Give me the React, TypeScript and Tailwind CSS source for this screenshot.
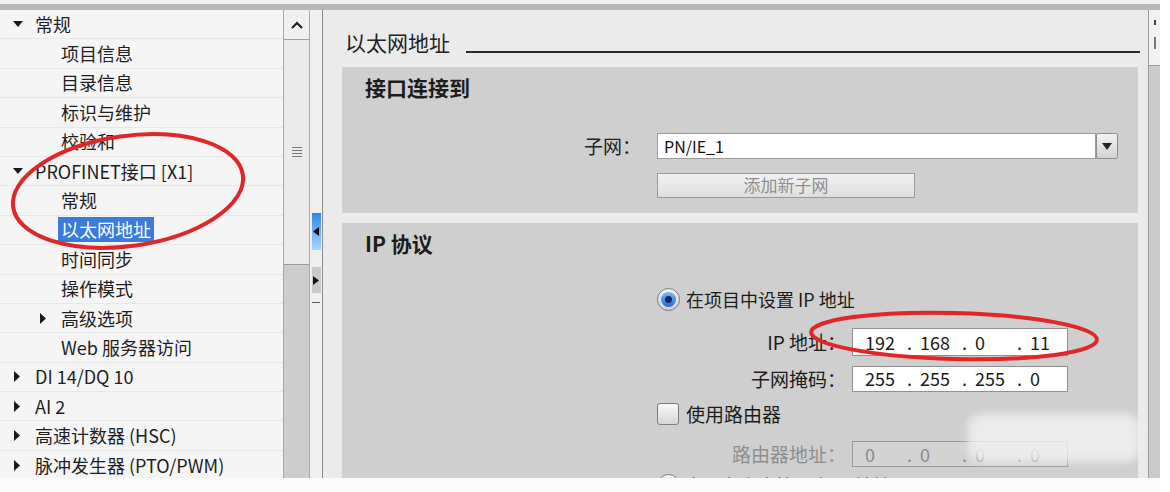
import React from 'react'

const font = { fontFamily: "'Noto Sans CJK SC', 'Noto Sans', sans-serif" }

type Row = { level: 0 | 1; arrow?: 'down' | 'right'; text: string; selected?: boolean }

const rows: Row[] = [
  { level: 0, arrow: 'down', text: '常规' },
  { level: 1, text: '项目信息' },
  { level: 1, text: '目录信息' },
  { level: 1, text: '标识与维护' },
  { level: 1, text: '校验和' },
  { level: 0, arrow: 'down', text: 'PROFINET接口 [X1]' },
  { level: 1, text: '常规' },
  { level: 1, text: '以太网地址', selected: true },
  { level: 1, text: '时间同步' },
  { level: 1, text: '操作模式' },
  { level: 1, arrow: 'right', text: '高级选项' },
  { level: 1, text: 'Web 服务器访问' },
  { level: 0, arrow: 'right', text: 'DI 14/DQ 10' },
  { level: 0, arrow: 'right', text: 'AI 2' },
  { level: 0, arrow: 'right', text: '高速计数器 (HSC)' },
  { level: 0, arrow: 'right', text: '脉冲发生器 (PTO/PWM)' },
]

function Arrow({ dir }: { dir: 'down' | 'right' }) {
  return dir === 'down' ? (
    <svg width="10" height="8" viewBox="0 0 10 8">
      <polygon points="0,1 10,1 5,7" fill="#1a1a1a" />
    </svg>
  ) : (
    <svg width="8" height="11" viewBox="0 0 8 11">
      <polygon points="1,0 7,5.5 1,11" fill="#1a1a1a" />
    </svg>
  )
}

function Tree() {
  return (
    <div className="w-[283px] h-full bg-[#f5f5f5] flex flex-col overflow-hidden">
      {rows.map((r, i) => (
        <div
          key={i}
          className={`h-[29.4px] shrink-0 flex items-center border-b border-[#e7e7e7] text-[18px] text-[#1e1e1e] ${r.level === 0 ? 'pl-[13px]' : 'pl-[39px]'}`}
        >
          <div className="w-[22px] flex items-center">{r.arrow && <Arrow dir={r.arrow} />}</div>
          {r.selected ? (
            <span className="bg-[#3a7bdc] text-white px-[3px] -ml-[3px] leading-[25px]">{r.text}</span>
          ) : (
            <span className="leading-[25px] whitespace-nowrap">{r.text}</span>
          )}
        </div>
      ))}
    </div>
  )
}

function ScrollBar() {
  return (
    <div className="w-[27px] h-full bg-[#cdcdcd] border-x border-[#a8a8a8] flex flex-col">
      <div className="h-[30px] bg-[#f0f0f0] border-b border-[#a0a0a0] flex items-center justify-center">
        <svg width="12" height="8" viewBox="0 0 12 8">
          <polyline points="1,7 6,2 11,7" fill="none" stroke="#222" strokeWidth="2.2" />
        </svg>
      </div>
      <div className="h-[225px] bg-[#ebebeb] border-b border-[#9a9a9a] flex items-center justify-center">
        <div className="flex flex-col gap-[2px] w-[10px]">
          <div className="h-[1px] bg-[#777]" />
          <div className="h-[1px] bg-[#777]" />
          <div className="h-[1px] bg-[#777]" />
          <div className="h-[1px] bg-[#777]" />
        </div>
      </div>
    </div>
  )
}

function SideStrip() {
  return (
    <div className="w-[13px] h-full bg-[#efefef] border-r border-[#8c8c8c] flex flex-col items-center">
      <div className="h-[203px]" />
      <div className="w-[9px] h-[37px] bg-gradient-to-b from-[#2a88e8] to-[#a9d6ff] flex items-center justify-center">
        <svg width="6" height="9" viewBox="0 0 6 9">
          <polygon points="6,0 0,4.5 6,9" fill="#111" />
        </svg>
      </div>
      <div className="h-[17px]" />
      <div className="w-[9px] h-[26px] bg-[#c9c9c9] flex items-center justify-center">
        <svg width="6" height="9" viewBox="0 0 6 9">
          <polygon points="0,0 6,4.5 0,9" fill="#111" />
        </svg>
      </div>
      <div className="mt-[9px] w-[8px] h-[1px] bg-[#555]" />
    </div>
  )
}

function Octets({ values }: { values: string[] }) {
  return (
    <div className="flex items-center pl-[12px] text-[18px]">
      {values.map((v, i) => (
        <div key={i} className="w-[55px] flex shrink-0">
          <span className="w-[42px]">{v}</span>
          {i < values.length - 1 && <span>.</span>}
        </div>
      ))}
    </div>
  )
}

function Field({ children, h, disabled }: { children: React.ReactNode; h: string; disabled?: boolean }) {
  return (
    <div
      className={`w-[216px] ${h} border flex items-center overflow-hidden ${disabled ? 'bg-[#d3d3d3] border-[#999] text-[#8a8a8a]' : 'bg-white border-[#8f8f8f] text-[#1a1a1a]'}`}
    >
      {children}
    </div>
  )
}

function Radio() {
  return (
    <div className="w-[23px] h-[23px] rounded-full border border-[#7b7b7b] bg-gradient-to-b from-[#f4f4f4] to-[#cfcfcf] flex items-center justify-center">
      <div className="w-[15px] h-[15px] rounded-full bg-gradient-to-b from-[#7ab8f5] to-[#1d6fd0] flex items-center justify-center">
        <div className="w-[7px] h-[7px] rounded-full bg-[#0b2d63]" />
      </div>
    </div>
  )
}

function RightPanel() {
  return (
    <div className="w-[825px] h-full bg-[#ebebeb] pl-[19px] pr-[10px] flex flex-col overflow-hidden">
      <div className="pt-[19px] flex items-end">
        <span className="text-[21px] leading-[26px] text-[#222] pl-[3px]">以太网地址</span>
        <div className="flex-1 h-[2px] bg-[#2b2b2b] ml-[16px] mb-[2px] mr-[-2px]" />
      </div>

      <div className="mt-[12px] h-[146px] bg-[#cfcfcf] flex flex-col shrink-0">
        <div className="pt-[7px] pl-[23px] text-[21px] leading-[26px] font-bold text-[#1c1c1c]">接口连接到</div>
        <div className="mt-[32px] flex items-center">
          <div className="w-[299px] text-right text-[19px] text-[#222]">子网：</div>
          <div className="ml-[16px] w-[461px] h-[26px] flex">
            <div className="flex-1 bg-white border border-[#9b9b9b] flex items-center pl-[6px] text-[16px] text-[#111]">
              PN/IE_1
            </div>
            <div className="w-[22px] bg-gradient-to-b from-[#f3f3f3] to-[#d2d2d2] border border-[#8e8e8e] rounded-[2px] flex items-center justify-center">
              <svg width="10" height="7" viewBox="0 0 10 7">
                <polygon points="0,0 10,0 5,7" fill="#222" />
              </svg>
            </div>
          </div>
        </div>
        <div className="mt-[12px] ml-[315px] w-[258px] h-[25px] bg-gradient-to-b from-[#f2f2f2] to-[#dedede] border border-[#9a9a9a] flex items-center justify-center text-[17px] text-[#8f8f8f]">
          添加新子网
        </div>
      </div>

      <div className="mt-[10px] flex-1 bg-[#cfcfcf] flex flex-col overflow-hidden">
        <div className="pt-[7px] pl-[23px] text-[21px] leading-[26px] font-bold text-[#1c1c1c]">IP 协议</div>

        <div className="mt-[31px] ml-[315px] flex items-center gap-[6px] h-[24px]">
          <Radio />
          <span className="text-[18px] text-[#1c1c1c]">在项目中设置 IP 地址</span>
        </div>

        <div className="mt-[17px] ml-[315px] flex items-center">
          <div className="w-[189px] text-right text-[19px] text-[#1c1c1c]">IP 地址：</div>
          <div className="ml-[6px]">
            <Field h="h-[28px]">
              <Octets values={['192', '168', '0', '11']} />
            </Field>
          </div>
        </div>

        <div className="mt-[8px] ml-[315px] flex items-center">
          <div className="w-[189px] text-right text-[19px] text-[#1c1c1c]">子网掩码：</div>
          <div className="ml-[6px]">
            <Field h="h-[26px]">
              <Octets values={['255', '255', '255', '0']} />
            </Field>
          </div>
        </div>

        <div className="mt-[10px] ml-[315px] flex items-center gap-[7px] h-[22px]">
          <div className="w-[22px] h-[22px] rounded-[3px] border border-[#7e7e7e] bg-gradient-to-b from-[#fafafa] to-[#d6d6d6]" />
          <span className="text-[19px] text-[#1c1c1c]">使用路由器</span>
        </div>

        <div className="mt-[15px] ml-[315px] flex items-center">
          <div className="w-[189px] text-right text-[19px] text-[#8e8e8e]">路由器地址：</div>
          <div className="ml-[6px]">
            <Field h="h-[26px]" disabled>
              <Octets values={['0', '0', '0', '0']} />
            </Field>
          </div>
        </div>

        <div className="mt-[5px] ml-[315px] flex items-center gap-[6px] h-[24px] shrink-0">
          <div className="w-[23px] h-[23px] rounded-full border border-[#7b7b7b] bg-gradient-to-b from-[#f4f4f4] to-[#cfcfcf]" />
          <span className="text-[18px] text-[#1c1c1c]">在设备上直接设定 IP 地址</span>
        </div>
      </div>
    </div>
  )
}

function RightEdge() {
  return (
    <div className="w-[12px] h-full bg-[#cbcbcb] border-l border-[#9d9d9d] flex flex-col">
      <div className="h-[56px] bg-[#f2f2f2] border-b border-[#a0a0a0] flex flex-col items-center pt-[10px] gap-[12px]">
        <div className="w-[2px] h-[5px] bg-[#444]" />
        <div className="w-[2px] h-[12px] bg-[#777]" />
      </div>
    </div>
  )
}

export default function App() {
  return (
    <div className="relative w-[1170px] h-[492px] bg-white overflow-hidden" style={font}>
      <div className="flex flex-col w-[1160px] h-full">
        <div className="h-[4px] bg-[#f1f1f1]" />
        <div className="h-[6px] bg-[#b8b8b8]" />
        <div className="flex h-[468px]">
          <Tree />
          <ScrollBar />
          <SideStrip />
          <RightPanel />
          <RightEdge />
        </div>
        <div className="flex-1 bg-[#fbfbfb]" />
      </div>

      <div className="absolute left-[968px] top-[414px] w-[172px] h-[48px] rounded-[14px] bg-[#f3f3f3]/80 blur-[4px]" />

      <svg className="absolute inset-0 pointer-events-none" width="1170" height="492" viewBox="0 0 1170 492">
        <ellipse cx="128" cy="191" rx="116" ry="55" transform="rotate(-8 128 191)" fill="none" stroke="#e02626" strokeWidth="4" />
        <ellipse cx="954" cy="336" rx="143" ry="23" transform="rotate(1.5 954 336)" fill="none" stroke="#e02626" strokeWidth="4" />
      </svg>
    </div>
  )
}
